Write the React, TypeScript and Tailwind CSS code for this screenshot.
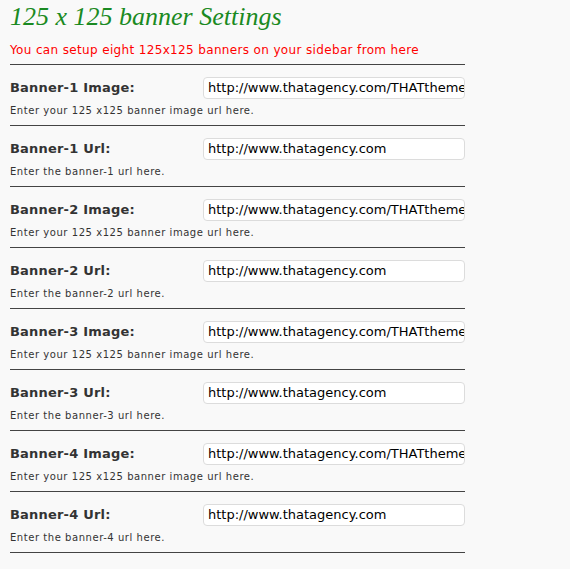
import React from "react";

const rows = [
  { label: "Banner-1 Image:", value: "http://www.thatagency.com/THATthemes/wp-content/banner.jpg", desc: "Enter your 125 x125 banner image url here." },
  { label: "Banner-1 Url:", value: "http://www.thatagency.com", desc: "Enter the banner-1 url here." },
  { label: "Banner-2 Image:", value: "http://www.thatagency.com/THATthemes/wp-content/banner.jpg", desc: "Enter your 125 x125 banner image url here." },
  { label: "Banner-2 Url:", value: "http://www.thatagency.com", desc: "Enter the banner-2 url here." },
  { label: "Banner-3 Image:", value: "http://www.thatagency.com/THATthemes/wp-content/banner.jpg", desc: "Enter your 125 x125 banner image url here." },
  { label: "Banner-3 Url:", value: "http://www.thatagency.com", desc: "Enter the banner-3 url here." },
  { label: "Banner-4 Image:", value: "http://www.thatagency.com/THATthemes/wp-content/banner.jpg", desc: "Enter your 125 x125 banner image url here." },
  { label: "Banner-4 Url:", value: "http://www.thatagency.com", desc: "Enter the banner-4 url here." },
];

export default function App() {
  return (
    <div className="w-[570px] h-[569px] bg-[#f9f9f9] overflow-hidden" style={{ fontFamily: '"DejaVu Sans", Verdana, sans-serif' }}>
      <div className="w-[455px] ml-[10px]">
        <h1 className="italic text-[26px] leading-[30px] pt-[2px] text-[#1a8a22]" style={{ fontFamily: '"Liberation Serif", Georgia, serif' }}>
          125 x 125 banner Settings
        </h1>
        <p className="text-[12px] leading-[15px] mt-[11px] tracking-[0.35px] text-[#ff0000] pb-[6px] border-b border-[#444]">
          You can setup eight 125x125 banners on your sidebar from here
        </p>
        {rows.map((r, i) => (
          <div key={i} className="border-b border-[#444] pt-[12px] pb-[8px]">
            <div className="flex items-center h-[22px]">
              <div className="w-[193px] font-bold text-[13px] tracking-[0.2px] text-[#333]">{r.label}</div>
              <div className="flex-1 h-[22px] bg-white border border-[#dcdcdc] rounded-[4px] overflow-hidden flex items-center pl-[4px]">
                <span className="whitespace-nowrap text-[13px] text-black">{r.value}</span>
              </div>
            </div>
            <div className="mt-[6px] text-[10px] leading-[12px] tracking-[0.55px] text-[#333]">{r.desc}</div>
          </div>
        ))}
      </div>
    </div>
  );
}
